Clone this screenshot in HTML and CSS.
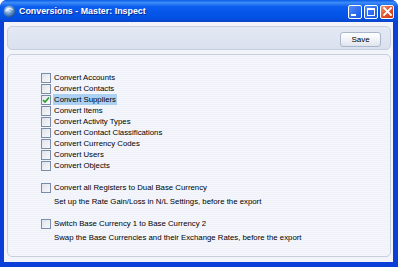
FILE: index.html
```html
<!DOCTYPE html>
<html>
<head>
<meta charset="utf-8">
<link rel="stylesheet" href="styles.css">
</head>
<body>
<div class="window">
  <div class="titlebar">
    <svg class="appicon" width="13" height="13" viewBox="0 0 13 13">
      <defs>
        <radialGradient id="g" cx="40%" cy="35%" r="65%">
          <stop offset="0" stop-color="#e8f2ff"/>
          <stop offset="0.5" stop-color="#6d9fd6"/>
          <stop offset="1" stop-color="#1e4f93"/>
        </radialGradient>
      </defs>
      <circle cx="6.5" cy="6.5" r="6" fill="url(#g)"/>
      <path d="M3 6.5 a3.5 3.5 0 0 1 6.5 -1.5" stroke="#ffffff" stroke-width="1.2" fill="none" opacity="0.8"/>
    </svg>
    <div class="title">Conversions - Master: Inspect</div>
    <div class="tbuttons">
      <div class="tbtn"><span class="min-glyph"></span></div>
      <div class="tbtn"><span class="max-glyph"></span></div>
      <div class="tbtn close">
        <svg width="9" height="9" viewBox="0 0 9 9"><path d="M1 1 L8 8 M8 1 L1 8" stroke="#fff" stroke-width="1.8" stroke-linecap="square"/></svg>
      </div>
    </div>
  </div>
  <div class="client">
    <div class="toolbar">
      <button class="save">Save</button>
    </div>
    <div class="panel">
      <div class="group">
        <div class="row"><span class="cb"></span><span class="lbl">Convert Accounts</span></div>
        <div class="row"><span class="cb"></span><span class="lbl">Convert Contacts</span></div>
        <div class="row"><span class="cb checked"><svg width="8" height="8" viewBox="0 0 8 8"><path d="M1 4 L3 6 L7 1.5" stroke="#21a121" stroke-width="1.6" fill="none"/></svg></span><span class="lbl sel">Convert Suppliers</span></div>
        <div class="row"><span class="cb"></span><span class="lbl">Convert Items</span></div>
        <div class="row"><span class="cb"></span><span class="lbl">Convert Activity Types</span></div>
        <div class="row"><span class="cb"></span><span class="lbl">Convert Contact Classifications</span></div>
        <div class="row"><span class="cb"></span><span class="lbl">Convert Currency Codes</span></div>
        <div class="row"><span class="cb"></span><span class="lbl">Convert Users</span></div>
        <div class="row"><span class="cb"></span><span class="lbl">Convert Objects</span></div>
      </div>
      <div class="group option">
        <div class="row"><span class="cb"></span><span class="lbl">Convert all Registers to Dual Base Currency</span></div>
        <div class="desc">Set up the Rate Gain/Loss in N/L Settings, before the export</div>
      </div>
      <div class="group option">
        <div class="row"><span class="cb"></span><span class="lbl">Switch Base Currency 1 to Base Currency 2</span></div>
        <div class="desc">Swap the Base Currencies and their Exchange Rates, before the export</div>
      </div>
    </div>
  </div>
</div>
</body>
</html>
```

FILE: styles.css
```css
* { box-sizing: border-box; }
html, body { margin: 0; padding: 0; }
body { width: 398px; height: 267px; overflow: hidden; background: #fff; font-family: "Liberation Sans", Arial, sans-serif; }

.window {
  width: 398px; height: 267px;
  display: flex; flex-direction: column;
  border-radius: 7px 7px 0 0;
  padding: 0 5px 5px 4px;
  background: #0b3fd8;
}

.titlebar {
  height: 22px;
  margin: 0 -5px 0 -4px;
  padding: 0 4px 0 3px;
  display: flex; align-items: center;
  border-radius: 7px 7px 0 0;
  background: linear-gradient(to bottom, #0a5ae8 0%, #3d8cf7 12%, #0c5ef0 30%, #0355e8 60%, #0250e2 85%, #0a44c8 100%);
}
.appicon { margin-right: 3px; margin-top: 1px; }
.title {
  flex: 1;
  color: #fff;
  font-weight: bold;
  font-size: 8.9px;
  text-shadow: 1px 1px 0 #0a2a9c;
}
.tbuttons { display: flex; gap: 2px; margin-top: 1px; }
.tbtn {
  width: 14px; height: 14px;
  border: 1px solid #fff;
  border-radius: 2px;
  background: linear-gradient(135deg, #5a8cf8 0%, #2f6ff0 50%, #1e58de 100%);
  display: flex; align-items: center; justify-content: center;
}
.tbtn.close { background: linear-gradient(135deg, #f1917a 0%, #e5532f 50%, #c63b18 100%); }
.min-glyph { width: 5px; height: 2px; background: #fff; margin-top: 6px; margin-right: 3px; }
.max-glyph { width: 8px; height: 8px; border: 1px solid #fff; border-top-width: 2px; }

.client {
  flex: 1;
  background: #f2f4fa;
  padding: 4px 2px 5px 3px;
  display: flex; flex-direction: column; gap: 4px;
}

.toolbar {
  height: 24px;
  border: 1px solid #c6cfe0;
  border-radius: 5px;
  background: linear-gradient(to bottom, #e4e9f4, #dae1ee);
  display: flex; align-items: center; justify-content: flex-end;
  padding-right: 9px;
}
.save {
  width: 41px; height: 15px;
  border: 1px solid #a9b6cb;
  border-radius: 3px;
  background: linear-gradient(to bottom, #ffffff, #eef1f6 60%, #dfe4ec);
  font-family: "Liberation Sans", Arial, sans-serif;
  font-size: 8px;
  color: #000;
  padding: 0;
  margin-top: 2px;
}

.panel {
  flex: 1;
  border: 1px solid #c6cfe0;
  border-radius: 5px;
  background: repeating-linear-gradient(to bottom, #f4f6fc 0, #f4f6fc 1px, #eff2f9 1px, #eff2f9 2px);
  padding: 17px 0 0 33px;
  display: flex; flex-direction: column; gap: 11px;
}
.group { display: flex; flex-direction: column; }
.row { height: 11px; display: flex; align-items: center; }
.cb {
  width: 10px; height: 10px;
  border: 1px solid #7a8ca8;
  background: linear-gradient(135deg, #dfe3ea, #f7f8fa);
  display: flex; align-items: center; justify-content: center;
  margin-right: 2px;
}
.cb.checked { background: linear-gradient(135deg, #e4e7ee, #fafbfc); }
.lbl {
  font-size: 7.8px; color: #000; line-height: 11px; padding: 0 1px;
  white-space: nowrap;
}
.lbl.sel { background: #acd0f2; }
.desc {
  font-size: 7.8px; line-height: 11px; color: #000;
  margin-top: 3px; padding-left: 13px;
  white-space: nowrap;
}
```
